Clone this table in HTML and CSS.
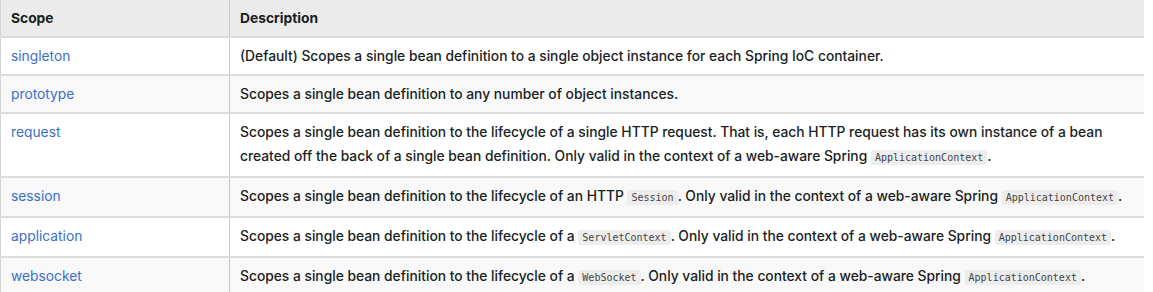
FILE: index.html
```html
<!DOCTYPE HTML>
<html>
  <head>
    <title>Bean Scopes</title>
    <meta charset="utf-8" />
    <link rel="stylesheet" href="styles.css">
  </head>
  <body>
    <table class="scopes">
      <colgroup>
        <col class="col-scope">
        <col>
      </colgroup>
      <thead>
        <tr>
          <th>Scope</th>
          <th>Description</th>
        </tr>
      </thead>
      <tbody>
        <tr>
          <td><a href="#singleton">singleton</a></td>
          <td>(Default) Scopes a single bean definition to a single object instance for each Spring IoC container.</td>
        </tr>
        <tr>
          <td><a href="#prototype">prototype</a></td>
          <td>Scopes a single bean definition to any number of object instances.</td>
        </tr>
        <tr>
          <td><a href="#request">request</a></td>
          <td>Scopes a single bean definition to the lifecycle of a single HTTP request. That is, each HTTP request has its own instance of a bean created off the back of a single bean definition. Only valid in the context of a web-aware Spring <code>ApplicationContext</code>.</td>
        </tr>
        <tr>
          <td><a href="#session">session</a></td>
          <td>Scopes a single bean definition to the lifecycle of an HTTP <code>Session</code>. Only valid in the context of a web-aware Spring <code>ApplicationContext</code>.</td>
        </tr>
        <tr>
          <td><a href="#application">application</a></td>
          <td>Scopes a single bean definition to the lifecycle of a <code>ServletContext</code>. Only valid in the context of a web-aware Spring <code>ApplicationContext</code>.</td>
        </tr>
        <tr>
          <td><a href="#websocket">websocket</a></td>
          <td>Scopes a single bean definition to the lifecycle of a <code>WebSocket</code>. Only valid in the context of a web-aware Spring <code>ApplicationContext</code>.</td>
        </tr>
      </tbody>
    </table>
  </body>
</html>
```

FILE: styles.css
```css
body {
  margin: 0;
  background: #fff;
  font-family: Inter, sans-serif;
  font-size: 13.8px;
  font-weight: 500;
  color: #191e1e;
}
.scopes {
  width: 1144px;
  border-collapse: collapse;
  border-left: 1px solid #d4d4d4;
}
.col-scope {
  width: 229px;
}
.scopes th,
.scopes td {
  text-align: left;
  vertical-align: top;
  padding: 6px 10px;
  line-height: 24px;
  border-bottom: 2px solid #dcdcdc;
}
.scopes th + th,
.scopes td + td {
  border-left: 1px solid #c8c8c8;
}
.scopes th {
  background: #ebebeb;
  font-weight: 700;
}
.scopes tbody tr:nth-child(even) {
  background: #f8f8f8;
}
.scopes a {
  color: #3a6fcc;
  font-weight: 400;
  text-decoration: none;
}
.scopes code {
  font-family: "DejaVu Sans Mono", monospace;
  font-size: 10px;
  font-weight: 400;
  background: #ededed;
  color: #444;
  padding: 2px 4px;
  border-radius: 2px;
}
```
